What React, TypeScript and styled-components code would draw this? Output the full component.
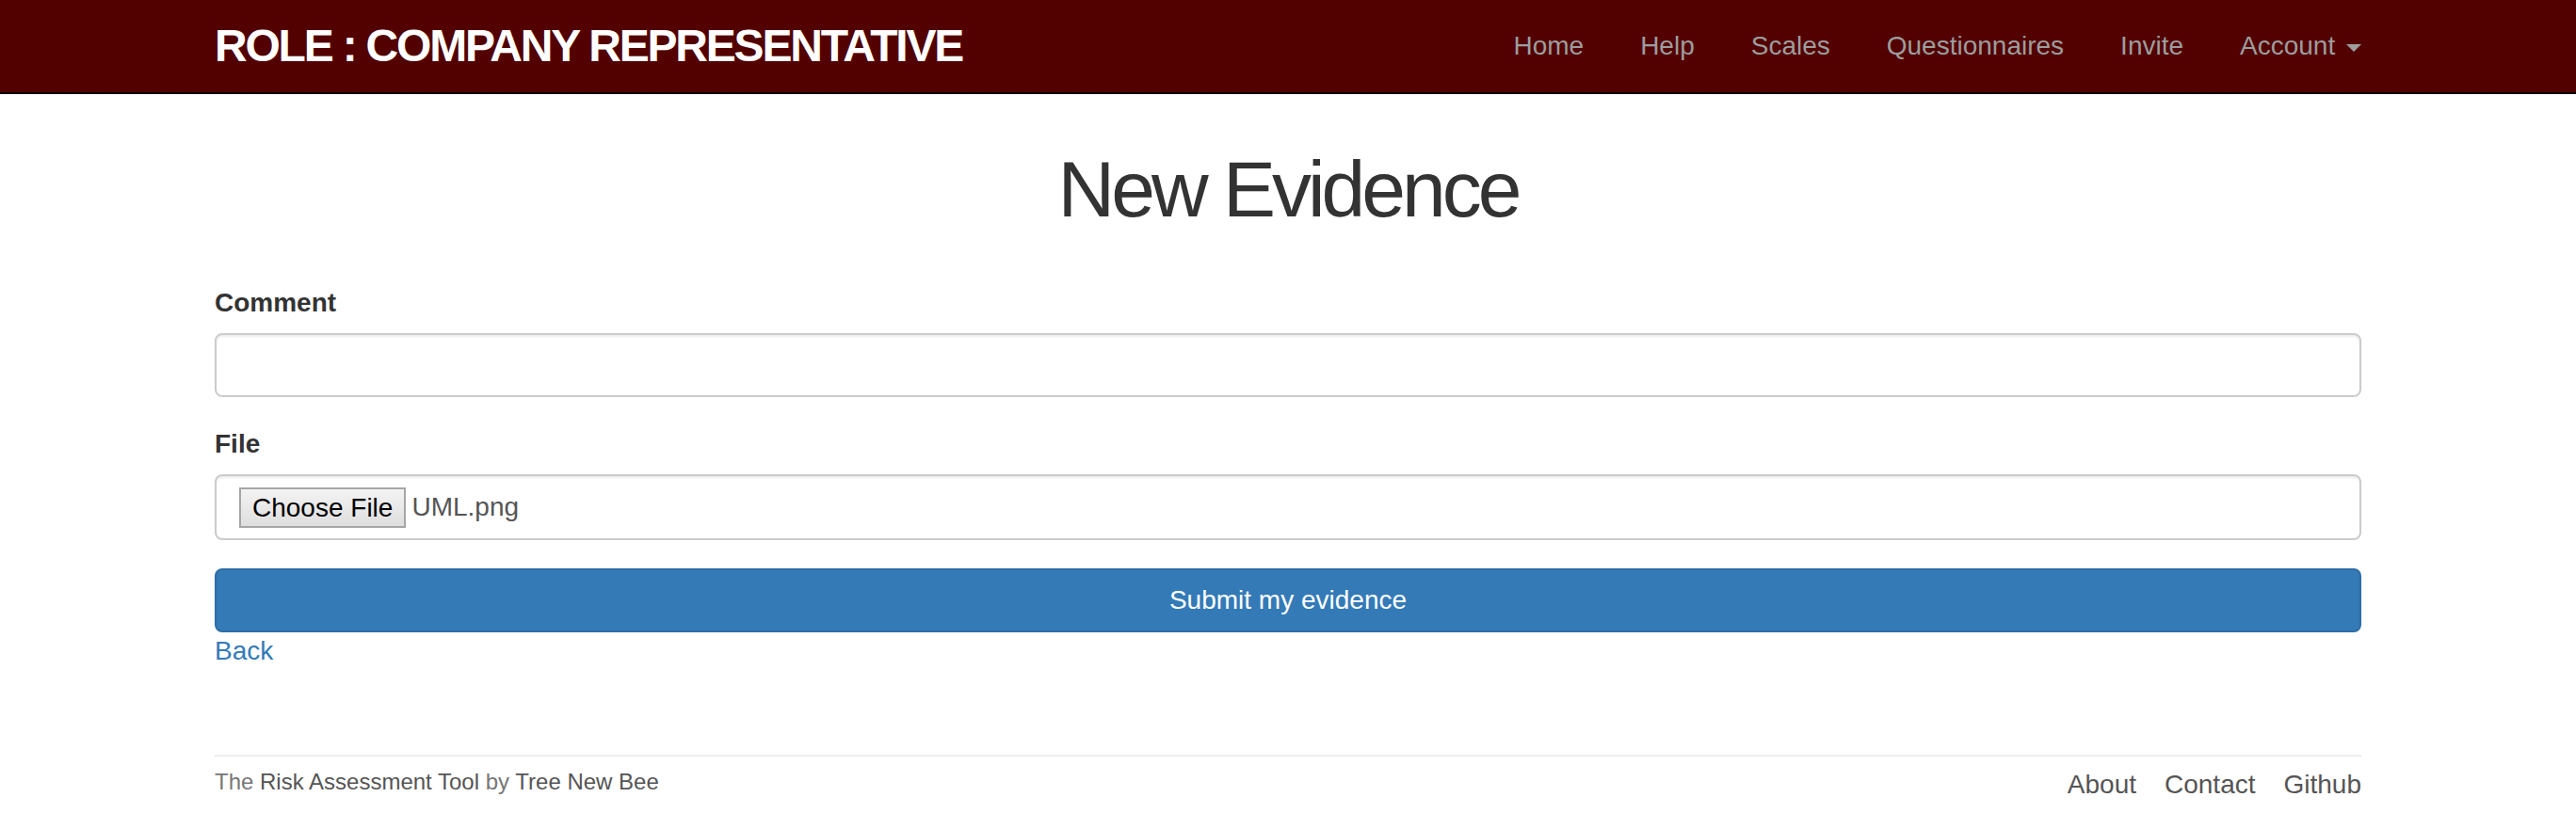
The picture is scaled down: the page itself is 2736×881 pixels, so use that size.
import React from "react";
import styled, { createGlobalStyle } from "styled-components";

const GlobalStyle = createGlobalStyle`
  html, body {
    margin: 0;
    padding: 0;
    background: #ffffff;
  }
  body {
    font-family: "Liberation Sans", Arial, Helvetica, sans-serif;
    font-size: 28px;
    line-height: 40px;
    color: #333333;
  }
  * { box-sizing: border-box; }
`;

const Navbar = styled.nav`
  height: 100px;
  background: #520000;
  border-bottom: 2px solid #0a0000;
`;

const Container = styled.div`
  width: 2340px;
  margin: 0 auto;
  padding: 0 30px;
`;

const NavInner = styled(Container)`
  height: 98px;
  display: flex;
  align-items: center;
  justify-content: space-between;
`;

const Brand = styled.a`
  color: #ffffff;
  font-weight: 700;
  font-size: 48px;
  letter-spacing: -2.2px;
  text-decoration: none;
  white-space: nowrap;
`;

const NavList = styled.ul`
  list-style: none;
  margin: 0 -30px 0 0;
  padding: 0;
  display: flex;
  height: 98px;
`;

const NavLink = styled.a`
  display: block;
  padding: 29px 30px 29px;
  line-height: 40px;
  color: #9d9d9d;
  text-decoration: none;
  white-space: nowrap;
`;

const Caret = styled.span`
  display: inline-block;
  width: 0;
  height: 0;
  margin-left: 4px;
  vertical-align: middle;
  border-top: 8px solid #9d9d9d;
  border-left: 8px solid transparent;
  border-right: 8px solid transparent;
`;

const Main = styled(Container)`
  padding-top: 55px;
`;

const Title = styled.h1`
  margin: 0;
  text-align: center;
  font-size: 84px;
  line-height: 92px;
  font-weight: 400;
  letter-spacing: -4px;
  color: #333333;
`;

const Form = styled.form`
  margin-top: 55px;
  display: flex;
  flex-direction: column;
`;

const FormGroup = styled.div`
  margin-bottom: 30px;
  display: flex;
  flex-direction: column;
`;

const Label = styled.label`
  font-weight: 700;
  font-size: 28px;
  line-height: 40px;
  margin-bottom: 12px;
`;

const TextInput = styled.input`
  height: 68px;
  padding: 12px 24px;
  font-family: inherit;
  font-size: 28px;
  color: #555555;
  background: #ffffff;
  border: 2px solid #cccccc;
  border-radius: 8px;
  box-shadow: inset 0 2px 2px rgba(0, 0, 0, 0.075);
  outline: none;
`;

const FileBox = styled.div`
  height: 70px;
  padding: 0 24px;
  display: flex;
  align-items: center;
  border: 2px solid #cccccc;
  border-radius: 8px;
  box-shadow: inset 0 2px 2px rgba(0, 0, 0, 0.075);
  background: #ffffff;
`;

const ChooseButton = styled.button`
  height: 43px;
  padding: 0 12px;
  margin: 0 6px 0 0;
  font-family: inherit;
  font-size: 28px;
  line-height: 39px;
  color: #000000;
  background: linear-gradient(#f3f3f3, #dedede);
  border: 2px solid #a6a6a6;
  border-radius: 0;
`;

const FileName = styled.span`
  font-size: 28px;
  color: #555555;
`;

const SubmitButton = styled.button`
  height: 68px;
  width: 100%;
  font-family: inherit;
  font-size: 28px;
  line-height: 40px;
  color: #ffffff;
  background: #337ab7;
  border: 2px solid #2e6da4;
  border-radius: 8px;
`;

const BackLink = styled.a`
  color: #337ab7;
  text-decoration: none;
  line-height: 40px;
  align-self: flex-start;
`;

const Footer = styled.footer`
  margin-top: 90px;
  border-top: 2px solid #eeeeee;
  padding-top: 10px;
  display: flex;
  justify-content: space-between;
  align-items: flex-start;
`;

const FooterText = styled.p`
  margin: 0;
  font-size: 24px;
  line-height: 34px;
  color: #777777;
`;

const FooterStrong = styled.a`
  color: #555555;
  text-decoration: none;
`;

const FooterLinks = styled.ul`
  list-style: none;
  margin: 0;
  padding: 0;
  display: flex;
  gap: 30px;
`;

const FooterLink = styled.a`
  color: #555555;
  text-decoration: none;
  font-size: 28px;
  line-height: 40px;
`;

const navItems = ["Home", "Help", "Scales", "Questionnaires", "Invite"];

export default function App() {
  return (
    <>
      <GlobalStyle />
      <Navbar>
        <NavInner>
          <Brand href="#">ROLE : COMPANY REPRESENTATIVE</Brand>
          <NavList>
            {navItems.map((item) => (
              <li key={item}>
                <NavLink href="#">{item}</NavLink>
              </li>
            ))}
            <li>
              <NavLink href="#">
                Account <Caret />
              </NavLink>
            </li>
          </NavList>
        </NavInner>
      </Navbar>
      <Main>
        <Title>New Evidence</Title>
        <Form onSubmit={(e) => e.preventDefault()}>
          <FormGroup>
            <Label htmlFor="comment">Comment</Label>
            <TextInput id="comment" type="text" />
          </FormGroup>
          <FormGroup>
            <Label>File</Label>
            <FileBox>
              <ChooseButton type="button">Choose File</ChooseButton>
              <FileName>UML.png</FileName>
            </FileBox>
          </FormGroup>
          <SubmitButton type="submit">Submit my evidence</SubmitButton>
          <BackLink href="#">Back</BackLink>
        </Form>
        <Footer>
          <FooterText>
            The <FooterStrong href="#">Risk Assessment Tool</FooterStrong> by{" "}
            <FooterStrong href="#">Tree New Bee</FooterStrong>
          </FooterText>
          <FooterLinks>
            <li>
              <FooterLink href="#">About</FooterLink>
            </li>
            <li>
              <FooterLink href="#">Contact</FooterLink>
            </li>
            <li>
              <FooterLink href="#">Github</FooterLink>
            </li>
          </FooterLinks>
        </Footer>
      </Main>
    </>
  );
}
